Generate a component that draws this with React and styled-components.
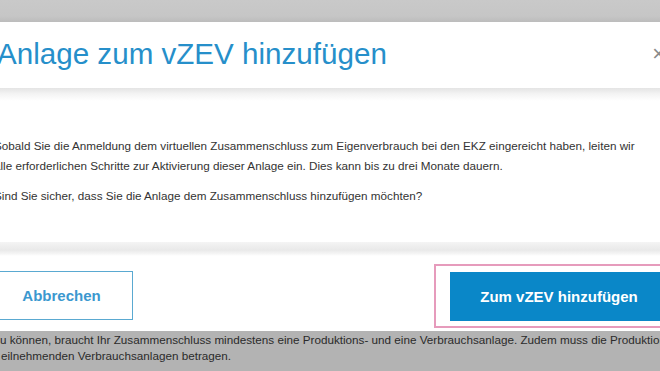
import React from 'react';
import styled, { createGlobalStyle } from 'styled-components';

const GlobalStyle = createGlobalStyle`
  html, body {
    margin: 0;
    padding: 0;
    background: #c8c8c8;
    overflow: hidden;
  }

  body {
    font-family: "Liberation Sans", Arial, sans-serif;
  }
`;

const Screen = styled.div`
  width: 660px;
  height: 371px;
  display: flex;
  flex-direction: column;
  overflow: hidden;
`;

const TopShade = styled.div`
  height: 22px;
  flex-shrink: 0;
  background: linear-gradient(to bottom, #c9c9c9 0, #c6c6c6 16px, #bcbcbc 22px);
`;

const Modal = styled.div`
  margin: 0 -20px;
  background: #fff;
  display: flex;
  flex-direction: column;
  flex-shrink: 0;
`;

const Header = styled.div`
  height: 66px;
  display: flex;
  align-items: center;
  justify-content: space-between;
  padding: 0 15px 2px 17px;
  box-sizing: border-box;
`;

const Title = styled.h2`
  margin: 0;
  font-size: 29.6px;
  font-weight: 400;
  line-height: 1;
  color: #268fca;
`;

const Close = styled.span`
  font-size: 22px;
  line-height: 1;
  color: #8a8a8a;
`;

const Body = styled.div`
  height: 154px;
  padding: 48px 0 0 14px;
  box-sizing: border-box;
  background: linear-gradient(to bottom, #e4e4e4 0, #f4f4f4 6px, #fff 13px);
  color: #333;
  font-size: 11.7px;
  line-height: 20px;
  white-space: nowrap;
`;

const Paragraph = styled.p`
  margin: 0 0 10px;
`;

const Footer = styled.div`
  height: 89px;
  box-sizing: border-box;
  display: flex;
  align-items: center;
  justify-content: space-between;
  padding: 18px 10px 0;
  background: linear-gradient(to bottom, #f4f4f4 0, #e9e9e9 8px, #f6f6f6 12px, #fff 14px);
`;

const Button = styled.button`
  height: 49px;
  font-family: "Liberation Sans", Arial, sans-serif;
  font-size: 15px;
  font-weight: 700;
  cursor: pointer;
  border-radius: 0;
  box-sizing: border-box;
  border: 1px solid ${(props) => (props.primary ? '#0a87c8' : '#5aa9d1')};
  background: ${(props) => (props.primary ? '#0a87c8' : '#fff')};
  color: ${(props) => (props.primary ? '#fff' : '#3b98cf')};
  width: ${(props) => props.width}px;
  padding: 0;
`;

const FocusRing = styled.div`
  padding: 6px 0 5px 14px;
  border: 2px solid #e69bbc;
  background: #fff;
`;

const BottomShade = styled.div`
  flex: 1;
  background: #b3b3b3;
  color: #2b2b2b;
  font-size: 11.7px;
  line-height: 16px;
  padding-top: 1px;
  white-space: nowrap;
`;

const Line = styled.div`
  margin-left: ${(props) => props.indent || 0}px;
`;

const App = () => (
  <>
    <GlobalStyle />
    <Screen>
      <TopShade />
      <Modal>
        <Header>
          <Title>Anlage zum vZEV hinzufügen</Title>
          <Close>×</Close>
        </Header>
        <Body>
          <Paragraph>
            Sobald Sie die Anmeldung dem virtuellen Zusammenschluss zum Eigenverbrauch bei den EKZ eingereicht haben, leiten wir
            <br />
            alle erforderlichen Schritte zur Aktivierung dieser Anlage ein. Dies kann bis zu drei Monate dauern.
          </Paragraph>
          <Paragraph>Sind Sie sicher, dass Sie die Anlage dem Zusammenschluss hinzufügen möchten?</Paragraph>
        </Body>
        <Footer>
          <Button width={143}>Abbrechen</Button>
          <FocusRing>
            <Button primary width={218}>Zum vZEV hinzufügen</Button>
          </FocusRing>
        </Footer>
      </Modal>
      <BottomShade>
        <Line>u können, braucht Ihr Zusammenschluss mindestens eine Produktions- und eine Verbrauchsanlage. Zudem muss die Produktion</Line>
        <Line indent={1}>eilnehmenden Verbrauchsanlagen betragen.</Line>
      </BottomShade>
    </Screen>
  </>
);

export default App;
